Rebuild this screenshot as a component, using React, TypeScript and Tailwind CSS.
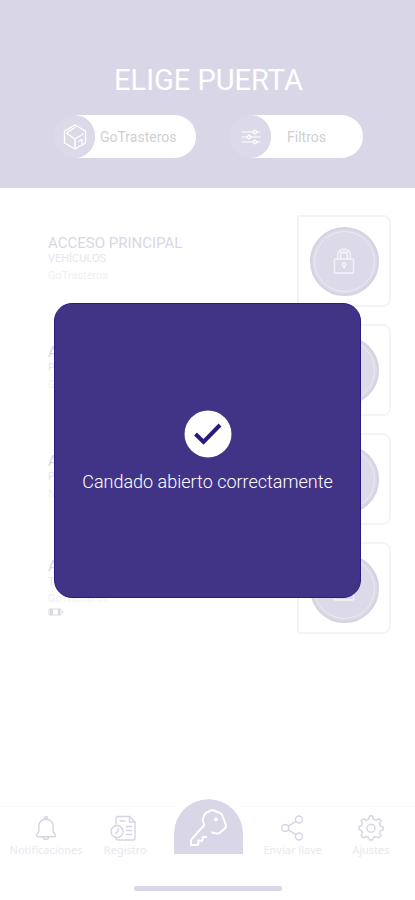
import type { ReactNode } from "react";

type Door = {
  name: string;
  detail: string;
  site: string;
  hasBattery?: boolean;
};

const doors: Door[] = [
  { name: "ACCESO PRINCIPAL", detail: "VEHÍCULOS", site: "GoTrasteros" },
  { name: "ACCESO PRINCIPAL", detail: "PEATONAL", site: "GoTrasteros" },
  { name: "ACCESO NAVE", detail: "P. 1", site: "Nave" },
  {
    name: "ACCESO NAVE",
    detail: "TRASTERO",
    site: "GoTrasteros",
    hasBattery: true,
  },
];

function BoxIcon() {
  return (
    <svg viewBox="0 0 24 26" fill="none" stroke="currentColor" strokeWidth="1.4" strokeLinejoin="round" strokeLinecap="round" className="h-[26px] w-6">
      <path d="M12 1 22.500 7v12L12 25 1.500 19V7z" />
      <path d="M4 9.500 12 15l8-5M12 15v9M4 8.500l8-5" />
      <path d="m15.500 17.500 3.500-2v4" />
    </svg>
  );
}

function SlidersIcon() {
  return (
    <svg viewBox="0 0 20 16" fill="none" stroke="currentColor" strokeWidth="1.2" strokeLinecap="round" className="h-4 w-5">
      <path d="M1 3h10.500M16.500 3H19M1 8h4.500M10.500 8H19M1 13h10.500M16.500 13H19" />
      <path d="m14 1 2.200 2L14 5l-2.200-2zM8 6l2.200 2L8 10 5.800 8zM14 11l2.200 2-2.200 2-2.200-2z" />
    </svg>
  );
}

function LockIcon() {
  return (
    <svg viewBox="0 0 22 26" fill="none" stroke="currentColor" strokeWidth="1.4" strokeLinejoin="round" className="h-[26px] w-[22px]">
      <rect x="1.500" y="11" width="19" height="14" rx="1" />
      <path d="M4.500 11V7.500a6.500 6.500 0 0 1 13 0V11M7.500 11V8a3.500 3.500 0 0 1 7 0v3" />
      <path d="M7 2.800 8.500 5M11 1v3M15 2.800 13.500 5" />
      <path d="M11 20.500v-2.300a1.700 1.700 0 1 1 .1 0" strokeWidth="1.600" />
    </svg>
  );
}

function BellIcon() {
  return (
    <svg viewBox="0 0 24 26" fill="none" stroke="currentColor" strokeWidth="1.400" strokeLinejoin="round" strokeLinecap="round" className="h-[26px] w-6">
      <circle cx="12" cy="2.800" r="1.400" />
      <path d="M12 4.200c-4.600 0-7.200 3.200-7.200 7.300v4.700c0 1.800-2.300 2.800-2.300 4.300 0 .8.500 1.200 1.300 1.200h16.400c.8 0 1.300-.4 1.300-1.200 0-1.500-2.300-2.500-2.300-4.300v-4.700c0-4.100-2.600-7.300-7.200-7.300z" />
      <path d="M9.500 22a2.500 2.500 0 0 0 5 0" />
    </svg>
  );
}

function LogIcon() {
  return (
    <svg viewBox="0 0 30 26" fill="none" stroke="currentColor" strokeWidth="1.400" strokeLinejoin="round" strokeLinecap="round" className="h-[26px] w-[30px]">
      <path d="M6 9V3.500a2 2 0 0 1 2-2h11.500L25 7v16a2 2 0 0 1-2 2H8a2 2 0 0 1-2-2" />
      <path d="M19.500 1.500V7H25M10 6h5M16.500 11.500h5M16.500 15.500h5M16.500 19.500h5" />
      <circle cx="7" cy="16.500" r="6" />
      <path d="M8.500 13.500 7.500 17l-2 1.500" />
    </svg>
  );
}

function KeyIcon() {
  return (
    <svg viewBox="-1 -1 38 38" fill="none" stroke="currentColor" strokeWidth="2" strokeLinejoin="round" strokeLinecap="round" className="mt-[3px] size-[38px]">
      <path d="M21 22.500l5 1c1 .1 2-.2 2.800-.8l4.700-4c.9-.8 1.400-2 1.400-3.200 0-.6-.2-1.300-.5-2L31 5c-.5-1-1.200-1.600-2.200-2L23 .5c-1-.4-2-.4-3 0l-4.500 2c-1 .5-1.600 1.300-2 2.300L12 9c-.3.800-.3 1.500 0 2.200l1.300 3.800L.8 29c-.5.500-.8 1.200-.8 2v4h6.500l1-1.200-.3-3.500 3.600.7 1-1.200-.3-2.600 3.500-.2" />
      <circle cx="25" cy="9.500" r="1" fill="currentColor" />
    </svg>
  );
}

function ShareIcon() {
  return (
    <svg viewBox="0 0 24 26" fill="none" stroke="currentColor" strokeWidth="1.400" className="h-[26px] w-6">
      <circle cx="18" cy="4.500" r="3.500" />
      <circle cx="4.200" cy="13" r="3.500" />
      <circle cx="18" cy="21.500" r="3.500" />
      <path d="m7.200 11.200 7.800-4.900M7.200 14.800l7.800 4.900" />
    </svg>
  );
}

function GearIcon() {
  return (
    <svg viewBox="0 0 26 26" fill="none" stroke="currentColor" strokeWidth="1.400" strokeLinejoin="round" className="size-[26px]">
      <path d="M11.500 1h3l1 3.300 2.500 1 3-1.700L23 6l-1.500 2.500 1 2.500 2.500.8v3l-2.500.8-1 2.500L23 20.500 20.500 23 18 21.500l-2.500 1-1 2.500h-3l-1-2.500-2.500-1L5.500 23 3 20.500l1.500-2.500-1-2.500L1 14.700v-3l2.500-.8 1-2.500L3 6l2.500-2.400L8 5.300l2.500-1z" />
      <circle cx="13" cy="13.200" r="4" />
    </svg>
  );
}

function BatteryIcon() {
  return (
    <svg viewBox="0 0 16 8" className="mt-px h-2 w-4 text-[#d9d7e4]">
      <rect x="1" y="1" width="12" height="6" rx="1" fill="none" stroke="currentColor" />
      <path d="M2 1h3v6H2zM10 1h2v6h-2zM14 3h1v2h-1z" fill="currentColor" />
    </svg>
  );
}

function DoorRow({ door }: { door: Door }) {
  return (
    <li className="flex justify-between">
      <div className={`text-[#e6e4ee] ${door.hasBattery ? "pt-3.5" : "pt-[18px]"}`}>
        <h2 className="text-[15px] leading-5 text-[#d8d6e4]">{door.name}</h2>
        <p className="text-[11px] leading-3">{door.detail}</p>
        <p className="mt-[3px] text-[11px] leading-4 text-[#f0f0f3]">{door.site}</p>
        {door.hasBattery && <BatteryIcon />}
      </div>

      <div className="flex h-[92px] w-[94px] items-center justify-center rounded-l-xs rounded-r-lg border-2 border-[#f4f4f6]">
        <button
          type="button"
          aria-label={`Abrir ${door.name}`}
          className="flex size-[69px] items-center justify-center rounded-full border-2 border-[#d5d3e0] bg-[#dcdae8] text-[#f3f2f8]"
        >
          <span className="flex size-[61px] items-center justify-center rounded-full border border-[#eceaf3]">
            <LockIcon />
          </span>
        </button>
      </div>
    </li>
  );
}

function NavItem({ label, children }: { label: string; children: ReactNode }) {
  return (
    <a href="#" className="flex flex-col items-center pt-2 text-[#d6d4e2]">
      {children}
      <span className="font-['Noto_Sans',sans-serif] text-[11px] leading-[18px] whitespace-nowrap text-[#e9e8ee]">
        {label}
      </span>
    </a>
  );
}

export default function App() {
  return (
    <div className="relative flex min-h-screen flex-col bg-white font-[Roboto,sans-serif]">
      <header className="bg-[#d9d7e7] pt-[60px] pr-[52px] pb-[30px] pl-[54px] text-white">
        <h1 className="text-center text-[29px] leading-10">ELIGE PUERTA</h1>

        <div className="mt-[15px] flex gap-[34px]">
          <button
            type="button"
            className="flex h-[43px] flex-[142] items-center rounded-full bg-linear-to-r from-[#d9d7e7] from-15% to-white to-15% text-sm text-[#cfcfd2]"
          >
            <span className="flex h-[43px] w-[41px] items-center justify-center rounded-full bg-[#dcd9e8] text-white">
              <BoxIcon />
            </span>
            <span className="pl-[5px]">GoTrasteros</span>
          </button>

          <button
            type="button"
            className="flex h-[43px] flex-[133] items-center rounded-full bg-linear-to-r from-[#d9d7e7] from-15% to-white to-15% text-sm text-[#cfcfd2]"
          >
            <span className="flex h-[43px] w-[41px] items-center justify-center rounded-full bg-[#dcd9e8] text-white">
              <SlidersIcon />
            </span>
            <span className="pl-4">Filtros</span>
          </button>
        </div>
      </header>

      <main className="flex-1 pt-[27px] pr-6 pb-10 pl-12">
        <ul className="flex flex-col gap-[17px]">
          {doors.map((door, index) => (
            <DoorRow key={index} door={door} />
          ))}
        </ul>
      </main>

      <footer className="border-t border-[#fafafa]">
        <nav className="grid grid-cols-[80fr_78fr_88fr_80fr_76fr] px-[6px]">
          <NavItem label="Notificaciones">
            <BellIcon />
          </NavItem>
          <NavItem label="Registro">
            <LogIcon />
          </NavItem>
          <a
            href="#"
            aria-label="Abrir puerta"
            className="-mt-2 flex h-[55px] w-[69px] items-center justify-center justify-self-center rounded-t-full bg-[#d9d7e7] text-white outline-6 outline-white"
          >
            <KeyIcon />
          </a>
          <NavItem label="Enviar llave">
            <ShareIcon />
          </NavItem>
          <NavItem label="Ajustes">
            <GearIcon />
          </NavItem>
        </nav>
        <div className="mx-auto mt-[27px] mb-[9px] h-[5px] w-[148px] rounded-full bg-[#d9d7e7]" />
      </footer>

      <div className="absolute inset-0 flex items-center px-[54px]">
        <div
          role="dialog"
          aria-labelledby="dialog-message"
          className="flex w-full flex-col items-center rounded-[18px] border border-[#2c1a80] bg-[#413486] pt-[106px] pb-[103px] text-white"
        >
          <svg viewBox="0 0 48 48" className="size-12">
            <circle cx="24" cy="24" r="23.500" fill="white" />
            <path d="m11.500 24 8 8 16.500-17" fill="none" stroke="#2b1a7e" strokeWidth="4" />
          </svg>
          <p id="dialog-message" className="mt-3 text-center text-lg leading-6 font-light">
            Candado abierto correctamente
          </p>
        </div>
      </div>
    </div>
  );
}
